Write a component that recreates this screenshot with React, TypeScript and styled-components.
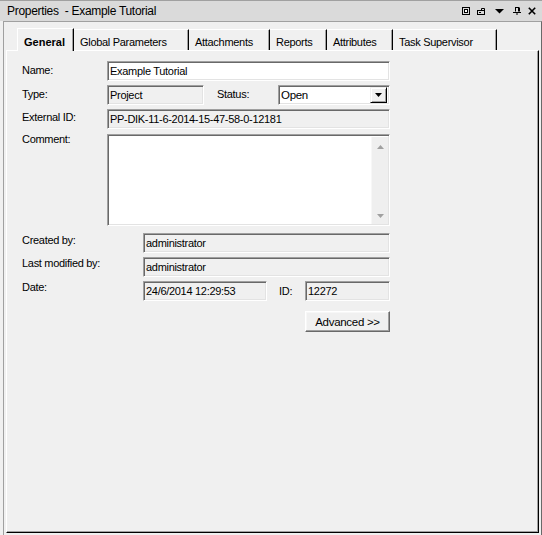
import React from "react";
import styled, { createGlobalStyle } from "styled-components";

const GlobalStyle = createGlobalStyle`
  html, body {
    margin: 0;
    padding: 0;
    background: #f0f0f0;
  }
  body {
    font-family: "Liberation Sans", Arial, sans-serif;
    font-size: 11px;
    letter-spacing: -0.3px;
    color: #000;
  }
  * {
    box-sizing: border-box;
  }
`;

const Window = styled.div`
  width: 542px;
  height: 535px;
  display: flex;
  flex-direction: column;
  background: #f0f0f0;
  overflow: hidden;
`;

const TitleBar = styled.div`
  height: 21px;
  flex: none;
  display: flex;
  align-items: center;
  padding: 0 6px 0 7px;
  background: #dadada;
  border-top: 1px solid #a0a0a0;
`;

const Title = styled.span`
  font-size: 12px;
  white-space: pre;
`;

const TitleIcons = styled.div`
  margin-left: auto;
  display: flex;
  align-items: center;
`;

const Glyph = styled.span<{ $gap: number }>`
  display: flex;
  margin-left: ${p => p.$gap}px;
`;

const Body = styled.div`
  flex: 1;
  display: flex;
  padding-left: 3px;
  min-height: 0;
`;

const Frame = styled.div`
  flex: 1;
  display: flex;
  flex-direction: column;
  border-left: 1px solid #a0a0a0;
  border-top: 1px solid #a0a0a0;
  border-right: 1px solid #696969;
  padding: 7px 2px 2px 2px;
`;

const TabStrip = styled.div`
  height: 21px;
  flex: none;
  display: flex;
  align-items: flex-end;
  padding-left: 11px;
  position: relative;
  z-index: 1;
`;

const Tab = styled.div<{ $w: number; $active?: boolean }>`
  width: ${p => p.$w}px;
  height: ${p => (p.$active ? 23 : 21)}px;
  margin-bottom: ${p => (p.$active ? -1 : 0)}px;
  padding: ${p => (p.$active ? 7 : 6)}px 0 0 6px;
  line-height: 13px;
  white-space: nowrap;
  background: #f0f0f0;
  border-top: 1px solid #fff;
  border-left: ${p => (p.$active ? "1px solid #fff" : "none")};
  border-right: 1px solid #000;
  box-shadow: inset -1px 0 0 #a0a0a0;
  font-weight: ${p => (p.$active ? "bold" : "normal")};
  letter-spacing: ${p => (p.$active ? "0" : "-0.3px")};
`;

const Panel = styled.div`
  flex: 1;
  background: #f0f0f0;
  border-top: 1px solid #fff;
  border-left: 1px solid #fff;
  border-right: 1px solid #000;
  border-bottom: 1px solid #000;
  box-shadow: inset -1px -1px 0 #a0a0a0;
  padding: 10px 0 0 15px;
  display: flex;
  flex-direction: column;
  gap: 4px;
`;

const Row = styled.div<{ $h?: number; $mt?: number }>`
  display: flex;
  align-items: flex-start;
  height: ${p => p.$h ?? 20}px;
  margin-top: ${p => p.$mt ?? 0}px;
`;

const Label = styled.div<{ $w: number; $dy?: number; $ml?: number }>`
  width: ${p => p.$w}px;
  flex: none;
  line-height: 13px;
  margin-top: ${p => p.$dy ?? 2}px;
  margin-left: ${p => p.$ml ?? 0}px;
  white-space: nowrap;
`;

const Field = styled.div<{ $w: number; $white?: boolean }>`
  width: ${p => p.$w}px;
  height: 20px;
  flex: none;
  display: flex;
  align-items: center;
  padding-left: 2px;
  white-space: nowrap;
  overflow: hidden;
  background: ${p => (p.$white ? "#fff" : "#f0f0f0")};
  border: 1px solid;
  border-color: #a0a0a0 #fff #fff #a0a0a0;
  box-shadow: inset 1px 1px 0 #696969, inset -1px -1px 0 #e3e3e3;
`;

const Combo = styled(Field)`
  padding-right: 2px;
  font-size: 11.5px;
`;

const ComboText = styled.span`
  flex: 1;
`;

const DropButton = styled.div`
  width: 17px;
  height: 16px;
  display: flex;
  align-items: center;
  justify-content: center;
  background: #f0f0f0;
  border: 1px solid;
  border-color: #f0f0f0 #000 #000 #f0f0f0;
  box-shadow: inset 1px 1px 0 #fff, inset -1px -1px 0 #a0a0a0;
`;

const Memo = styled.div`
  width: 283px;
  height: 92px;
  flex: none;
  display: flex;
  justify-content: flex-end;
  background: #fff;
  border: 1px solid;
  border-color: #a0a0a0 #fff #fff #a0a0a0;
  box-shadow: inset 1px 1px 0 #696969, inset -1px -1px 0 #e3e3e3;
  padding: 2px 1px 1px 2px;
`;

const ScrollTrack = styled.div`
  width: 17px;
  display: flex;
  flex-direction: column;
  justify-content: space-between;
  align-items: center;
  padding: 8px 0 6px;
  background: #efefef;
  border-left: 1px solid #f7f7f7;
`;

const Button = styled.div`
  width: 85px;
  height: 21px;
  margin-left: 283px;
  display: flex;
  align-items: center;
  justify-content: center;
  font-size: 11.5px;
  background: #f0f0f0;
  border: 1px solid;
  border-color: #fff #696969 #696969 #fff;
  box-shadow: inset -1px -1px 0 #a0a0a0, inset 1px 1px 0 #f7f7f7;
`;

const FloatIcon = () => (
  <svg width="8" height="8" viewBox="0 0 8 8">
    <rect x="0.5" y="0.5" width="7" height="7" fill="none" stroke="#000" />
    <rect x="2" y="2" width="4" height="4" fill="#000" />
    <rect x="3" y="3" width="2" height="2" fill="#fff" />
  </svg>
);

const AutoHideIcon = () => (
  <svg width="8" height="8" viewBox="0 0 8 8">
    <path d="M4.5 3.5 V1.5 H7.5 V3.5" fill="none" stroke="#000" />
    <rect x="0.5" y="3.5" width="7" height="4" fill="none" stroke="#000" />
    <rect x="2" y="5" width="2" height="1" fill="#000" />
  </svg>
);

const MenuIcon = () => (
  <svg width="9" height="8" viewBox="0 0 9 8">
    <path d="M0 2 H9 L4.5 6.5 Z" fill="#000" />
  </svg>
);

const PinIcon = () => (
  <svg width="8" height="8" viewBox="0 0 8 8">
    <path d="M2.5 0.5 V4.5 M5.5 0.5 V4.5 M6.5 0.5 V4.5 M2 0.5 H6" fill="none" stroke="#000" />
    <path d="M0 5 H8 V6 H0 Z M3.5 6 H4.5 V8 H3.5 Z" fill="#000" />
  </svg>
);

const CloseIcon = () => (
  <svg width="8" height="8" viewBox="0 0 8 8">
    <path d="M0.8 0.8 L7.2 7.2 M7.2 0.8 L0.8 7.2" stroke="#000" strokeWidth="1.6" />
  </svg>
);

const DownArrow = ({ color = "#000" }: { color?: string }) => (
  <svg width="7" height="4" viewBox="0 0 7 4">
    <path d="M0 0 H7 L3.5 4 Z" fill={color} />
  </svg>
);

const UpArrow = () => (
  <svg width="7" height="4" viewBox="0 0 7 4">
    <path d="M0 4 H7 L3.5 0 Z" fill="#a0a0a0" />
  </svg>
);

const tabs = [
  { label: "General", w: 57 },
  { label: "Global Parameters", w: 115 },
  { label: "Attachments", w: 81 },
  { label: "Reports", w: 57 },
  { label: "Attributes", w: 66 },
  { label: "Task Supervisor", w: 104 }
];

export default function App() {
  return (
    <>
      <GlobalStyle />
      <Window>
        <TitleBar>
          <Title>Properties  - Example Tutorial</Title>
          <TitleIcons>
            <Glyph $gap={0}>
              <FloatIcon />
            </Glyph>
            <Glyph $gap={7}>
              <AutoHideIcon />
            </Glyph>
            <Glyph $gap={10}>
              <MenuIcon />
            </Glyph>
            <Glyph $gap={9}>
              <PinIcon />
            </Glyph>
            <Glyph $gap={7}>
              <CloseIcon />
            </Glyph>
          </TitleIcons>
        </TitleBar>
        <Body>
          <Frame>
            <TabStrip>
              {tabs.map((t, i) => (
                <Tab key={t.label} $w={t.w} $active={i === 0}>
                  {t.label}
                </Tab>
              ))}
            </TabStrip>
            <Panel>
              <Row>
                <Label $w={85} $dy={3}>Name:</Label>
                <Field $w={283} $white>Example Tutorial</Field>
              </Row>
              <Row>
                <Label $w={85} $dy={3}>Type:</Label>
                <Field $w={97}>Project</Field>
                <Label $w={61} $ml={13} $dy={3}>Status:</Label>
                <Combo $w={112} $white>
                  <ComboText>Open</ComboText>
                  <DropButton>
                    <DownArrow />
                  </DropButton>
                </Combo>
              </Row>
              <Row>
                <Label $w={85} $dy={2}>External ID:</Label>
                <Field $w={283}>PP-DIK-11-6-2014-15-47-58-0-12181</Field>
              </Row>
              <Row $h={92} $mt={1}>
                <Label $w={85} $dy={-1}>Comment:</Label>
                <Memo>
                  <ScrollTrack>
                    <UpArrow />
                    <DownArrow color="#a0a0a0" />
                  </ScrollTrack>
                </Memo>
              </Row>
              <Row $mt={3}>
                <Label $w={121} $dy={1}>Created by:</Label>
                <Field $w={247}>administrator</Field>
              </Row>
              <Row>
                <Label $w={121} $dy={0}>Last modified by:</Label>
                <Field $w={247}>administrator</Field>
              </Row>
              <Row>
                <Label $w={121} $dy={0}>Date:</Label>
                <Field $w={124}>24/6/2014 12:29:53</Field>
                <Label $w={26} $ml={12} $dy={4}>ID:</Label>
                <Field $w={85}>12272</Field>
              </Row>
              <Row $h={21} $mt={6}>
                <Button>Advanced &gt;&gt;</Button>
              </Row>
            </Panel>
          </Frame>
        </Body>
      </Window>
    </>
  );
}
